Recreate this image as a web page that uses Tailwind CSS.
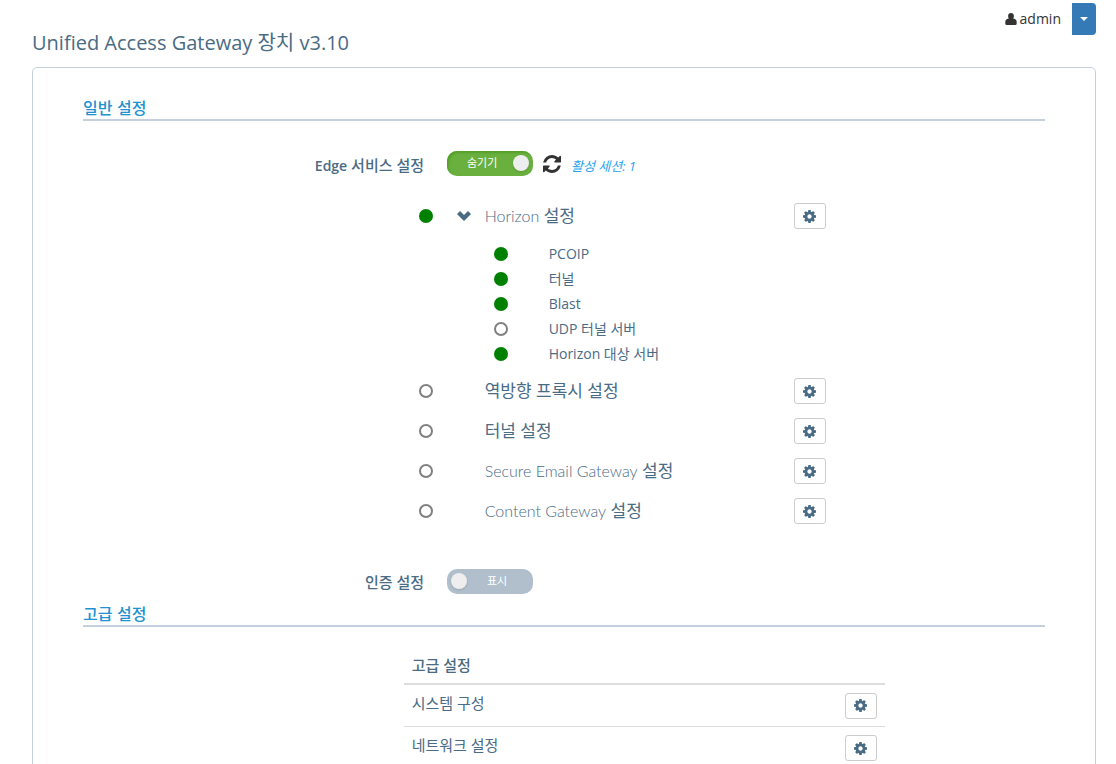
<!DOCTYPE html>
<html lang="ko">
<head>
    <meta charset="UTF-8">
    <meta name="viewport" content="width=device-width, initial-scale=1.0">
    <title>Unified Access Gateway</title>
    <script src="https://cdn.jsdelivr.net/npm/@tailwindcss/browser@4"></script>
</head>
<body class="bg-white text-[#4a6b84] text-sm overflow-hidden h-screen font-['Open_Sans','Noto_Sans_CJK_KR',sans-serif]">
    <!-- Icon shapes shared by the page -->
    <svg class="hidden">
        <symbol id="cog" viewBox="0 128 1536 1536">
            <path fill="currentColor" d="M1024 896q0-106-75-181t-181-75-181 75-75 181 75 181 181 75 181-75 75-181zm512-109v222q0 12-8 23t-20 13l-185 28q-19 54-39 91 35 50 107 138 10 12 10 25t-9 23q-27 37-99 108t-94 71q-12 0-26-9l-138-108q-44 23-91 38-16 136-29 186-7 28-36 28h-222q-14 0-24.500-8.500t-11.500-21.500l-28-184q-49-16-90-37l-141 107q-10 9-25 9-14 0-25-11-126-114-165-168-7-10-7-23 0-12 8-23 15-21 51-66.500t54-70.500q-27-50-41-99l-183-27q-13-2-21-12.500t-8-23.500v-222q0-12 8-23t19-13l186-28q14-46 39-92-40-57-107-138-10-12-10-24 0-10 9-23 26-36 98.500-107.500t94.500-71.500q13 0 26 10l138 107q44-23 91-38 16-136 29-186 7-28 36-28h222q14 0 24.500 8.500t11.500 21.500l28 184q49 16 90 37l142-107q9-9 24-9 13 0 25 10 129 119 165 170 7 8 7 22 0 12-8 23-15 21-51 66.500t-54 70.500q26 50 41 98l183 28q13 2 21 12.500t8 23.500z"/>
        </symbol>
    </svg>

    <!-- Header -->
    <header class="pl-8 pr-5 pt-[3px]">
        <div class="flex justify-end items-center h-8 text-[#333]">
            <svg class="w-3 h-3 mr-[3px]" viewBox="0 0 12 12" fill="currentColor"><path d="M6 0C4.300 0 3.100 1.200 3.100 3c0 1 .3 1.900.8 2.600C2 5.800.3 6.800.3 9v1.800c0 .7.5 1.200 1.200 1.200h9c.7 0 1.200-.5 1.200-1.200V9c0-2.200-1.700-3.200-3.600-3.400.5-.7.8-1.600.8-2.600C8.900 1.200 7.700 0 6 0z"/></svg>
            <span>admin</span>
            <button aria-label="admin" class="ml-[11px] w-6 h-8 rounded-r bg-[#337ab7] flex items-center justify-center">
                <svg class="w-2 h-1" viewBox="0 0 8 4"><path fill="#fff" d="M0 0h8L4 4z"/></svg>
            </button>
        </div>
        <h1 class="text-xl leading-8 -mt-2">Unified Access Gateway 장치 v3.10</h1>
    </header>

    <main class="ml-8 mr-5 mt-2 border border-[#c4d1dc] rounded-[5px] px-[50px] pt-7 pb-10">
        <!-- General settings -->
        <h2 class="text-base leading-[23px] font-medium text-[#2191d0] border-b-2 border-[#c4d1dc] font-['Noto_Sans_CJK_KR',sans-serif]">일반 설정</h2>

        <div class="grid grid-cols-[341fr_598fr] gap-x-[23px] items-center mt-[30px]">
            <label for="edge" class="text-right text-[15px] font-semibold font-['Open_Sans','Noto_Sans_CJK_KR',sans-serif] pt-1"><span class="text-sm">Edge</span> <span class="font-medium">서비스 설정</span></label>
            <div class="flex items-center">
                <label class="relative w-[86px] h-[25px] rounded-[10px] bg-[#69b03f] shadow-[inset_2px_2px_2px_#57a12b] text-white text-[11px] leading-6 pl-5">
                    <input id="edge" type="checkbox" checked class="sr-only">숨기기
                    <span class="absolute right-1 top-1 size-4 rounded-full bg-[#eee] shadow"></span>
                </label>
                <button aria-label="새로 고침" class="ml-[10px] text-[#333]">
                    <svg class="size-[18px]" viewBox="0 128 1536 1536"><path fill="currentColor" d="M1511 1056q0 5-1 7-64 268-268 434.500t-478 166.500q-146 0-282.500-55t-243.500-157l-129 129q-19 19-45 19t-45-19-19-45v-448q0-26 19-45t45-19h448q26 0 45 19t19 45-19 45l-137 137q71 66 161 102t187 36q134 0 250-65t186-179q11-17 53-117 8-23 30-23h192q13 0 22.500 9.500t9.500 22.500zm25-800v448q0 26-19 45t-45 19h-448q-26 0-45-19t-19-45 19-45l138-138q-148-137-349-137-134 0-250 65t-186 179q-11 17-53 117-8 23-30 23h-199q-13 0-22.500-9.500t-9.500-22.500v-7q65-268 270-434.500t480-166.500q146 0 284 55.500t245 156.500l130-129q19-19 45-19t45 19 19 45z"/></svg>
                </button>
                <a href="#" class="ml-[10px] pt-1 text-[13px] leading-4 italic text-[#2ba3ee]">활성 세션: 1</a>
            </div>
        </div>

        <!-- Edge services -->
        <div class="ml-[33.333%] w-1/2 pl-[15px] pr-[59px] mt-5 text-[17px]">
            <div class="flex items-center h-10">
                <span class="size-[14px] rounded-full bg-[#008000]"></span>
                <button aria-label="Horizon 설정" class="ml-[23px] w-[29px]">
                    <svg class="w-4 h-3" viewBox="0 0 16 12"><path fill="currentColor" d="M1 4l3-3 4 4 4-4 3 3-7 7z"/></svg>
                </button>
                <span class="flex-1"><span class="text-base font-light font-[Lato]">Horizon</span> 설정</span>
                <button aria-label="Horizon 설정" class="w-8 h-[26px] border border-[#ccc] rounded-[3px] flex items-center justify-center"><svg class="size-[13px]"><use href="#cog"/></svg></button>
            </div>
            <ul class="pl-[75px] my-[5px] text-sm leading-[25px]">
                <li class="flex items-center h-[25px]"><span class="size-[14px] mr-[41px] rounded-full bg-[#008000]"></span>PCOIP</li>
                <li class="flex items-center h-[25px]"><span class="size-[14px] mr-[41px] rounded-full bg-[#008000]"></span>터널</li>
                <li class="flex items-center h-[25px]"><span class="size-[14px] mr-[41px] rounded-full bg-[#008000]"></span>Blast</li>
                <li class="flex items-center h-[25px]"><span class="size-[14px] mr-[41px] rounded-full border-2 border-[#808080]"></span>UDP 터널 서버</li>
                <li class="flex items-center h-[25px]"><span class="size-[14px] mr-[41px] rounded-full bg-[#008000]"></span>Horizon 대상 서버</li>
            </ul>
            <div class="flex items-center h-10">
                <span class="size-[14px] mr-[52px] rounded-full border-2 border-[#808080]"></span>
                <span class="flex-1">역방향 프록시 설정</span>
                <button aria-label="역방향 프록시 설정" class="w-8 h-[26px] border border-[#ccc] rounded-[3px] flex items-center justify-center"><svg class="size-[13px]"><use href="#cog"/></svg></button>
            </div>
            <div class="flex items-center h-10">
                <span class="size-[14px] mr-[52px] rounded-full border-2 border-[#808080]"></span>
                <span class="flex-1">터널 설정</span>
                <button aria-label="터널 설정" class="w-8 h-[26px] border border-[#ccc] rounded-[3px] flex items-center justify-center"><svg class="size-[13px]"><use href="#cog"/></svg></button>
            </div>
            <div class="flex items-center h-10">
                <span class="size-[14px] mr-[52px] rounded-full border-2 border-[#808080]"></span>
                <span class="flex-1"><span class="text-base font-light font-[Lato]">Secure Email Gateway</span> 설정</span>
                <button aria-label="Secure Email Gateway 설정" class="w-8 h-[26px] border border-[#ccc] rounded-[3px] flex items-center justify-center"><svg class="size-[13px]"><use href="#cog"/></svg></button>
            </div>
            <div class="flex items-center h-10">
                <span class="size-[14px] mr-[52px] rounded-full border-2 border-[#808080]"></span>
                <span class="flex-1"><span class="text-base font-light font-[Lato]">Content Gateway</span> 설정</span>
                <button aria-label="Content Gateway 설정" class="w-8 h-[26px] border border-[#ccc] rounded-[3px] flex items-center justify-center"><svg class="size-[13px]"><use href="#cog"/></svg></button>
            </div>
        </div>

        <!-- Authentication -->
        <div class="grid grid-cols-[341fr_598fr] gap-x-[23px] items-center mt-[37px]">
            <label for="auth" class="text-right text-[15px] font-medium pt-1">인증 설정</label>
            <label class="relative w-[86px] h-[25px] rounded-[10px] bg-[#b0bfcb] text-white text-[11px] leading-6 pl-10">
                <input id="auth" type="checkbox" class="sr-only">표시
                <span class="absolute left-1 top-1 size-4 rounded-full bg-[#eee] shadow"></span>
            </label>
        </div>

        <!-- Advanced settings -->
        <h2 class="mt-2 text-base leading-[23px] font-medium text-[#2191d0] border-b-2 border-[#c4d1dc] font-['Noto_Sans_CJK_KR',sans-serif]">고급 설정</h2>

        <table class="ml-[33.333%] w-1/2 mt-5 text-[15px] leading-5">
            <thead>
                <tr class="border-b-2 border-[#ddd] h-[37px]"><th colspan="2" class="px-2 text-left font-medium">고급 설정</th></tr>
            </thead>
            <tbody>
                <tr class="border-b border-[#ddd] h-[43px]">
                    <td class="px-2 pt-2 align-top">시스템 구성</td>
                    <td class="px-2 w-12"><button aria-label="시스템 구성" class="w-8 h-[26px] border border-[#ccc] rounded-[3px] flex items-center justify-center"><svg class="size-[13px]"><use href="#cog"/></svg></button></td>
                </tr>
                <tr class="border-b border-[#ddd] h-[43px]">
                    <td class="px-2 pt-2 align-top">네트워크 설정</td>
                    <td class="px-2 w-12"><button aria-label="네트워크 설정" class="w-8 h-[26px] border border-[#ccc] rounded-[3px] flex items-center justify-center"><svg class="size-[13px]"><use href="#cog"/></svg></button></td>
                </tr>
            </tbody>
        </table>
    </main>
</body>
</html>
